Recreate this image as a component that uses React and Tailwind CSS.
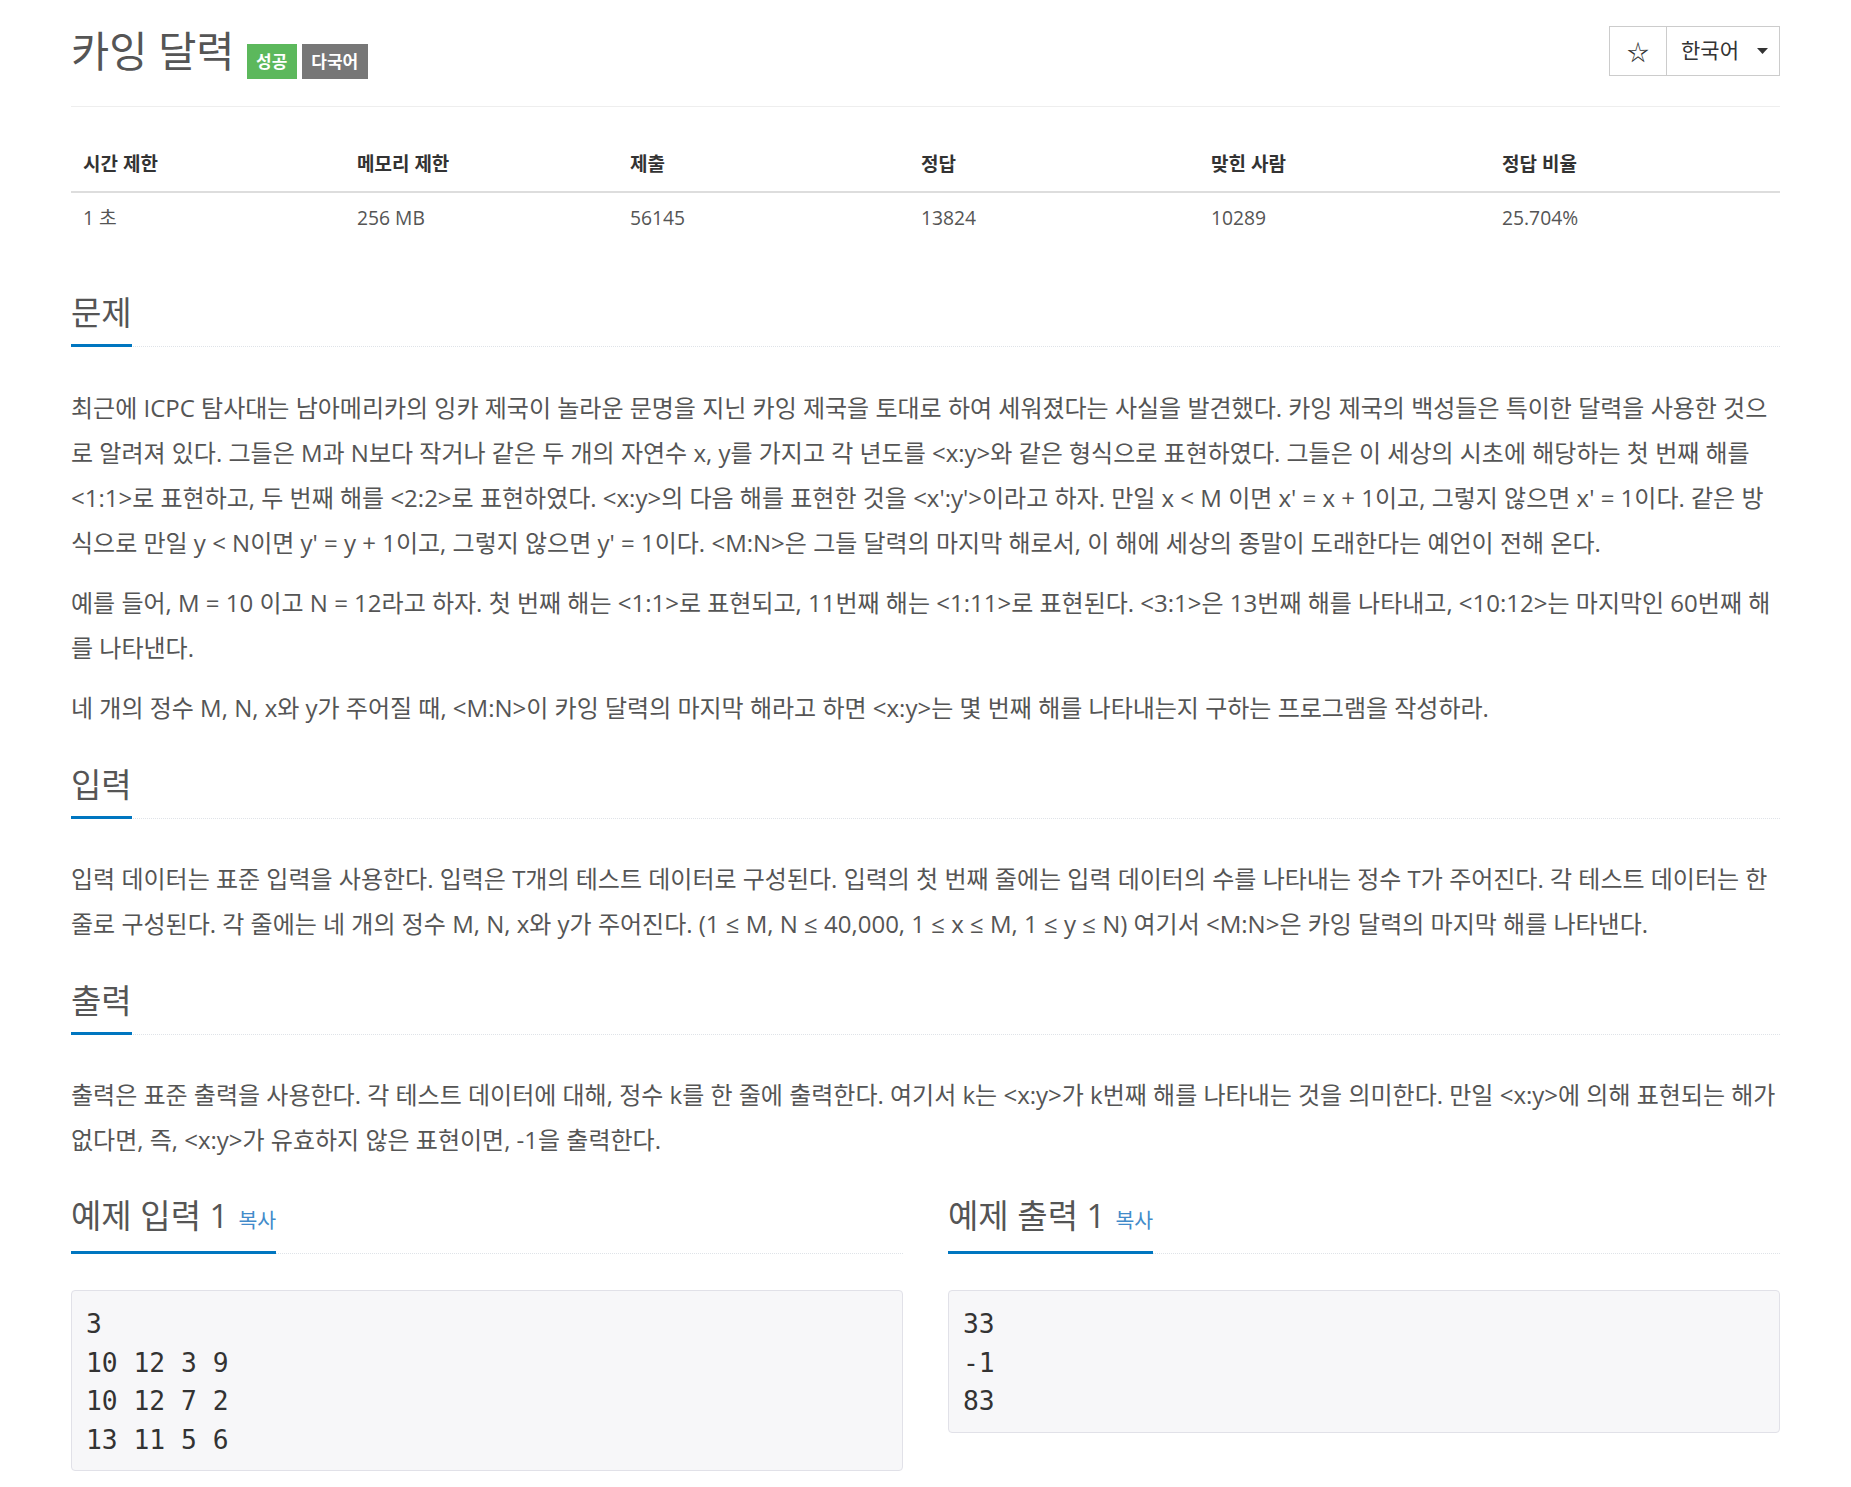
import React from 'react'

const FONT = { fontFamily: '"Open Sans", "Noto Sans CJK KR", sans-serif' }

const stats = [
  ['시간 제한', '1 초', 'w-[274px]'],
  ['메모리 제한', '256 MB', 'w-[273px]'],
  ['제출', '56145', 'w-[291px]'],
  ['정답', '13824', 'w-[290px]'],
  ['맞힌 사람', '10289', 'w-[291px]'],
  ['정답 비율', '25.704%', ''],
]

function Headline({ children, copy }) {
  return (
    <div className="flex border-b border-dotted border-[#dfe3e8]">
      <h2 className="-mb-px flex items-baseline border-b-[3px] border-[#0076c0] pb-[11px] text-[33px] leading-[40px] font-normal text-[#555]">
        {children}
        {copy && <span className="ml-[10px] text-[20.5px] text-[#428bca]">복사</span>}
      </h2>
    </div>
  )
}

function Para({ children, className = '' }) {
  return <p className={'text-[24px] leading-[45px] text-[#555] ' + className}>{children}</p>
}

function Sample({ title, lines }) {
  return (
    <section>
      <Headline copy>{title}</Headline>
      <pre
        className="mt-[36px] rounded-sm border border-[#e1e1e8] bg-[#f7f7f9] px-[14px] pt-[14px] pb-[11px] text-[26.3px] leading-[38.5px] text-[#333]"
        style={{ fontFamily: '"DejaVu Sans Mono", monospace' }}
      >
        {lines.join('\n')}
      </pre>
    </section>
  )
}

export default function App() {
  return (
    <div className="min-h-screen bg-white px-[71px] pt-[26px] pb-[17px]" style={FONT}>
      {/* title row */}
      <div className="flex h-[81px] items-start justify-between border-b border-[#eee]">
        <div className="flex items-start">
          <h1 className="text-[41.5px] leading-[50px] font-normal text-[#555]">카잉 달력</h1>
          <span className="mt-[18px] ml-[12px] flex h-[35px] items-center bg-[#5cb85c] px-[9.5px] text-[17px] font-bold text-white">성공</span>
          <span className="mt-[18px] ml-[5px] flex h-[35px] items-center bg-[#777] px-[9.5px] text-[17px] font-bold text-white">다국어</span>
        </div>
        <div className="flex h-[50px] border border-[#ccc] text-[#333]">
          <button className="flex w-[57px] items-center justify-center border-r border-[#ccc] text-[22px]">☆</button>
          <button className="flex w-[112px] items-center gap-[18px] pl-[14px] text-[21px]">
            한국어
            <svg width="11" height="6" viewBox="0 0 11 6"><path d="M0 0h11L5.5 6z" fill="#333" /></svg>
          </button>
        </div>
      </div>

      {/* stats table */}
      <table className="mt-[30px] w-full table-fixed border-collapse">
        <thead>
          <tr className="border-b-2 border-[#ddd]">
            {stats.map(([h, , w]) => (
              <th key={h} className={'px-[12px] pt-[15px] pb-[15px] text-left text-[19px] leading-[24px] font-bold text-[#333] ' + w}>{h}</th>
            ))}
          </tr>
        </thead>
        <tbody>
          <tr>
            {stats.map(([h, v]) => (
              <td key={h} className="px-[12px] py-[13px] text-[19.3px] leading-[24px] text-[#555]">{v}</td>
            ))}
          </tr>
        </tbody>
      </table>

      {/* 문제 */}
      <section className="mt-[50px]">
        <Headline>문제</Headline>
        <div className="mt-[38px] flex flex-col gap-[15px]">
          <Para>
            최근에 ICPC 탐사대는 남아메리카의 잉카 제국이 놀라운 문명을 지닌 카잉 제국을 토대로 하여 세워졌다는 사실을 발견했다. 카잉 제국의 백성들은 특이한 달력을 사용한 것으로 알려져 있다. 그들은 M과 N보다 작거나 같은 두 개의 자연수 x, y를 가지고 각 년도를 &lt;x:y&gt;와 같은 형식으로 표현하였다. 그들은 이 세상의 시초에 해당하는 첫 번째 해를 &lt;1:1&gt;로 표현하고, 두 번째 해를 &lt;2:2&gt;로 표현하였다. &lt;x:y&gt;의 다음 해를 표현한 것을 &lt;x':y'&gt;이라고 하자. 만일 x &lt; M 이면 x' = x + 1이고, 그렇지 않으면 x' = 1이다. 같은 방식으로 만일 y &lt; N이면 y' = y + 1이고, 그렇지 않으면 y' = 1이다. &lt;M:N&gt;은 그들 달력의 마지막 해로서, 이 해에 세상의 종말이 도래한다는 예언이 전해 온다.
          </Para>
          <Para>
            예를 들어, M = 10 이고 N = 12라고 하자. 첫 번째 해는 &lt;1:1&gt;로 표현되고, 11번째 해는 &lt;1:11&gt;로 표현된다. &lt;3:1&gt;은 13번째 해를 나타내고, &lt;10:12&gt;는 마지막인 60번째 해를 나타낸다.
          </Para>
          <Para>
            네 개의 정수 M, N, x와 y가 주어질 때, &lt;M:N&gt;이 카잉 달력의 마지막 해라고 하면 &lt;x:y&gt;는 몇 번째 해를 나타내는지 구하는 프로그램을 작성하라.
          </Para>
        </div>
      </section>

      {/* 입력 */}
      <section className="mt-[35px]">
        <Headline>입력</Headline>
        <Para className="mt-[37px]">
          입력 데이터는 표준 입력을 사용한다. 입력은 T개의 테스트 데이터로 구성된다. 입력의 첫 번째 줄에는 입력 데이터의 수를 나타내는 정수 T가 주어진다. 각 테스트 데이터는 한 줄로 구성된다. 각 줄에는 네 개의 정수 M, N, x와 y가 주어진다. (1 ≤ M, N ≤ 40,000, 1 ≤ x ≤ M, 1 ≤ y ≤ N) 여기서 &lt;M:N&gt;은 카잉 달력의 마지막 해를 나타낸다.
        </Para>
      </section>

      {/* 출력 */}
      <section className="mt-[35px]">
        <Headline>출력</Headline>
        <Para className="mt-[37px]">
          출력은 표준 출력을 사용한다. 각 테스트 데이터에 대해, 정수 k를 한 줄에 출력한다. 여기서 k는 &lt;x:y&gt;가 k번째 해를 나타내는 것을 의미한다. 만일 &lt;x:y&gt;에 의해 표현되는 해가 없다면, 즉, &lt;x:y&gt;가 유효하지 않은 표현이면, -1을 출력한다.
        </Para>
      </section>

      {/* 예제 */}
      <div className="mt-[34px] grid grid-cols-2 items-start gap-[45px]">
        <Sample title="예제 입력 1" lines={['3', '10 12 3 9', '10 12 7 2', '13 11 5 6']} />
        <Sample title="예제 출력 1" lines={['33', '-1', '83']} />
      </div>
    </div>
  )
}
